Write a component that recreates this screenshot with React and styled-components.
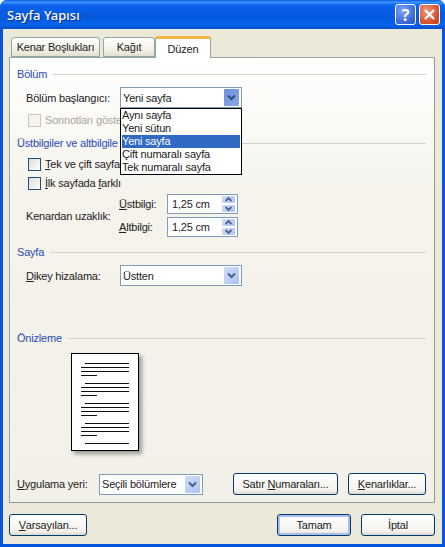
import React from "react"
import styled, { createGlobalStyle } from "styled-components"

const GlobalStyle = createGlobalStyle`
  html, body {
    margin: 0;
    padding: 0;
    background: #fff;
  }
  * {
    box-sizing: border-box;
  }
`

const Window = styled.div`
  width: 445px;
  height: 547px;
  display: flex;
  flex-direction: column;
  border-radius: 7px 7px 0 0;
  overflow: hidden;
  background: #0855dd;
  font-family: "Liberation Sans", Arial, sans-serif;
  font-size: 11px;
  letter-spacing: -0.2px;
  color: #222;
`

const TitleBar = styled.div`
  flex: 0 0 29px;
  display: flex;
  align-items: center;
  padding: 0 5px 0 7px;
  letter-spacing: 0;
  background: linear-gradient(180deg, #0a5be0 0%, #3d95ff 8%, #0a63ee 18%, #0559dd 55%, #0663ea 85%, #0a4fc8 100%);
`

const Title = styled.div`
  flex: 1;
  color: #fff;
  font-family: "Noto Sans", sans-serif;
  font-size: 13px;
  font-weight: 500;
  text-shadow: 1px 1px 1px #0f2f8a;
`

const CaptionButton = styled.div`
  width: 21px;
  height: 21px;
  margin-left: 3px;
  display: flex;
  align-items: center;
  justify-content: center;
  border: 1px solid #fff;
  border-radius: 3px;
  color: #fff;
  font-family: "Noto Sans", sans-serif;
  font-size: 16px;
  font-weight: 700;
  background: ${p =>
    p.$close
      ? "radial-gradient(circle at 35% 30%, #ec9a80, #d9562f 60%, #bd3d18)"
      : "radial-gradient(circle at 35% 30%, #7fa4f2, #3f6fdc 60%, #2a52c2)"};
`

const Client = styled.div`
  flex: 1;
  margin: 0 3px 3px;
  padding: 6px 6px 0;
  display: flex;
  flex-direction: column;
  background: #ece9d8;
`

const Tabs = styled.div`
  height: 22px;
  display: flex;
  align-items: flex-end;
  padding-left: 2px;
  position: relative;
  z-index: 1;
`

const Tab = styled.div`
  height: ${p => (p.$active ? "22px" : "20px")};
  width: ${p => p.$width}px;
  margin-right: ${p => p.$gap || 0}px;
  margin-bottom: ${p => (p.$active ? "-1px" : "0")};
  display: flex;
  align-items: center;
  justify-content: center;
  border: 1px solid #94a7a7;
  border-bottom: ${p => (p.$active ? "none" : "1px solid #94a7a7")};
  border-top: ${p => (p.$active ? "3px solid #f4b43c" : "1px solid #94a7a7")};
  border-radius: 3px 3px 0 0;
  background: ${p => (p.$active ? "#fff" : "linear-gradient(180deg, #fff, #f0eee3 70%, #e3e0d0)")};
`

const Panel = styled.div`
  height: 446px;
  width: 426px;
  padding: 9px 8px 0 7px;
  display: flex;
  flex-direction: column;
  border: 1px solid #94a7a7;
  border-right-color: #8b9a9a;
  border-bottom-color: #8b9a9a;
  background: linear-gradient(180deg, #fff 0%, #f5f3ec 30%, #f2f0e8 100%);
`

const SectionHeader = styled.div`
  height: 14px;
  margin-top: ${p => p.$top || 0}px;
  display: flex;
  align-items: center;
  color: #2a4bb2;
  &::after {
    content: "";
    flex: 1;
    height: 1px;
    margin-left: 6px;
    background: #d5d3c8;
  }
`

const Row = styled.div`
  display: flex;
  align-items: center;
  margin-top: ${p => p.$top || 0}px;
  padding-left: ${p => p.$indent || 0}px;
`

const Label = styled.div`
  width: ${p => p.$width}px;
  flex: none;
`

const U = styled.span`
  text-decoration: underline;
`

const SelectBox = styled.div`
  position: relative;
  width: ${p => p.$width}px;
  height: 21px;
  flex: none;
  display: flex;
  align-items: center;
  padding: 0 2px;
  border: 1px solid #7f9db9;
  background: #fff;
`

const SelectValue = styled.div`
  flex: 1;
  white-space: nowrap;
`

const ArrowButton = styled.div`
  width: 15px;
  height: 17px;
  display: flex;
  align-items: center;
  justify-content: center;
  border-radius: 1px;
  background: ${p =>
    p.$open
      ? "linear-gradient(135deg, #6e8fdc, #8ba7e8)"
      : "linear-gradient(135deg, #cfdcf9, #adc3f3)"};
`

const DropList = styled.div`
  position: absolute;
  left: -1px;
  top: 20px;
  width: 122px;
  height: 67px;
  padding: 0 1px;
  border: 1px solid #000;
  background: #fff;
  z-index: 2;
`

const DropItem = styled.div`
  height: 13px;
  line-height: 13px;
  white-space: nowrap;
  color: ${p => (p.$selected ? "#fff" : "#222")};
  background: ${p => (p.$selected ? "#316ac5" : "transparent")};
`

const CheckRow = styled.div`
  display: flex;
  align-items: center;
  height: 14px;
  margin-top: ${p => p.$top}px;
  padding-left: 11px;
  white-space: nowrap;
  color: ${p => (p.$disabled ? "#aca899" : "inherit")};
`

const Box = styled.div`
  width: 13px;
  height: 13px;
  margin-right: 4px;
  flex: none;
  border: 1px solid ${p => (p.$disabled ? "#cac8bb" : "#1c5180")};
  background: ${p => (p.$disabled ? "#f5f3ec" : "linear-gradient(135deg, #dcdcd7, #fff)")};
`

const DistanceGroup = styled.div`
  height: 43px;
  margin-top: 4px;
  padding-left: 9px;
  display: flex;
  align-items: center;
`

const SpinColumn = styled.div`
  display: flex;
  flex-direction: column;
  gap: 3px;
`

const SpinRow = styled.div`
  display: flex;
  align-items: center;
`

const SpinBox = styled.div`
  width: 71px;
  height: 20px;
  display: flex;
  align-items: center;
  padding: 0 1px 0 4px;
  border: 1px solid #7f9db9;
  background: #fff;
`

const SpinButtons = styled.div`
  width: 15px;
  height: 18px;
  display: flex;
  flex-direction: column;
`

const SpinButton = styled.div`
  flex: 1;
  display: flex;
  align-items: center;
  justify-content: center;
  background: linear-gradient(135deg, #d0ddf9, #adc3f3);
  border: 1px solid #fff;
  border-radius: 2px;
`

const PreviewPage = styled.div`
  width: 68px;
  height: 98px;
  margin: 8px 0 0 54px;
  flex: none;
  background: #fff;
  border: 1px solid #000;
  box-shadow: 3px 3px 4px #9b9a94;
`

const BottomRow = styled.div`
  height: 22px;
  margin-top: 22px;
  display: flex;
  align-items: center;
`

const Button = styled.div`
  width: ${p => p.$width}px;
  height: 22px;
  margin-left: ${p => p.$left || 0}px;
  flex: none;
  display: flex;
  align-items: center;
  justify-content: center;
  white-space: pre;
  border: 1px solid #003c74;
  border-radius: 3px;
  background: linear-gradient(180deg, #fff, #f4f3ee 80%, #dcd8ca);
  box-shadow: ${p => (p.$default ? "inset 0 0 0 2px #a9c0ea" : "none")};
`

const Footer = styled.div`
  display: flex;
  align-items: center;
  margin-top: 11px;
`

const Chevron = ({ open }) => (
  <svg width="9" height="7" viewBox="0 0 9 7">
    <path d="M1 1.5 L4.5 5 L8 1.5" fill="none" stroke={open ? "#2f4a80" : "#4d6185"} strokeWidth="2" />
  </svg>
)

const SpinArrow = ({ up }) => (
  <svg width="7" height="5" viewBox="0 0 7 5">
    <path d={up ? "M0.5 4 L3.5 1 L6.5 4" : "M0.5 1 L3.5 4 L6.5 1"} fill="none" stroke="#4d6185" strokeWidth="1.8" />
  </svg>
)

const Select = ({ width, value, open, children }) => (
  <SelectBox $width={width}>
    <SelectValue>{value}</SelectValue>
    <ArrowButton $open={open}>
      <Chevron open={open} />
    </ArrowButton>
    {children}
  </SelectBox>
)

const Spinner = ({ value }) => (
  <SpinBox>
    <SelectValue>{value}</SelectValue>
    <SpinButtons>
      <SpinButton>
        <SpinArrow up />
      </SpinButton>
      <SpinButton>
        <SpinArrow />
      </SpinButton>
    </SpinButtons>
  </SpinBox>
)

// x, y, width of each line on the small page
const previewLines = [0, 20, 40, 60].flatMap(y => [
  [14, y + 10, 44],
  [10, y + 14, 48],
  [10, y + 18, 48],
  [10, y + 22, 16],
])

const PageDrawing = () => (
  <svg width="66" height="96" viewBox="0 0 66 96">
    {previewLines.map(([x, y, w]) => (
      <rect key={`${x}-${y}`} x={x - 1} y={y - 1} width={w} height="1" fill="#111" />
    ))}
    <rect x="13" y="89" width="44" height="1" fill="#111" />
  </svg>
)

const App = () => {
  return (
    <Window>
      <GlobalStyle />
      <TitleBar>
        <Title>Sayfa Yapısı</Title>
        <CaptionButton>?</CaptionButton>
        <CaptionButton $close>
          <svg width="13" height="13" viewBox="0 0 13 13">
            <path d="M2 2 L11 11 M11 2 L2 11" stroke="#fff" strokeWidth="2.4" />
          </svg>
        </CaptionButton>
      </TitleBar>
      <Client>
        <Tabs>
          <Tab $width={89} $gap={3}>Kenar Boşlukları</Tab>
          <Tab $width={52}>Kağıt</Tab>
          <Tab $width={56} $active>Düzen</Tab>
        </Tabs>
        <Panel>
          <SectionHeader>Bölüm</SectionHeader>
          <Row $top={6} $indent={9}>
            <Label $width={94}>Bölüm başlangıcı:</Label>
            <Select width={122} value="Yeni sayfa" open>
              <DropList>
                <DropItem>Aynı sayfa</DropItem>
                <DropItem>Yeni sütun</DropItem>
                <DropItem $selected>Yeni sayfa</DropItem>
                <DropItem>Çift numaralı sayfa</DropItem>
                <DropItem>Tek numaralı sayfa</DropItem>
              </DropList>
            </Select>
          </Row>
          <CheckRow $top={5} $disabled>
            <Box $disabled />
            Sonnotları göste
          </CheckRow>
          <SectionHeader $top={9}>Üstbilgiler ve altbilgile</SectionHeader>
          <CheckRow $top={7}>
            <Box />
            <span><U>T</U>ek ve çift sayfa</span>
          </CheckRow>
          <CheckRow $top={5}>
            <Box />
            <span><U>İ</U>lk sayfada <U>f</U>arklı</span>
          </CheckRow>
          <DistanceGroup>
            <Label $width={93}>Kenardan uzaklık:</Label>
            <SpinColumn>
              <SpinRow>
                <Label $width={48}><U>Ü</U>stbilgi:</Label>
                <Spinner value="1,25 cm" />
              </SpinRow>
              <SpinRow>
                <Label $width={48}><U>A</U>ltbilgi:</Label>
                <Spinner value="1,25 cm" />
              </SpinRow>
            </SpinColumn>
          </DistanceGroup>
          <SectionHeader $top={8}>Sayfa</SectionHeader>
          <Row $top={6} $indent={9}>
            <Label $width={94}><U>D</U>ikey hizalama:</Label>
            <Select width={122} value="Üstten" />
          </Row>
          <SectionHeader $top={45}>Önizleme</SectionHeader>
          <PreviewPage>
            <PageDrawing />
          </PreviewPage>
          <BottomRow>
            <Label $width={82}><U>U</U>ygulama yeri:</Label>
            <Select width={104} value="Seçili bölümlere" />
            <Button $width={105} $left={30}>Satır <U>N</U>umaraları...</Button>
            <Button $width={78} $left={10}><U>K</U>enarlıklar...</Button>
          </BottomRow>
        </Panel>
        <Footer>
          <Button $width={78}><U>V</U>arsayılan...</Button>
          <Button $width={74} $left={190} $default>Tamam</Button>
          <Button $width={74} $left={10}>İptal</Button>
        </Footer>
      </Client>
    </Window>
  )
}

export default App
